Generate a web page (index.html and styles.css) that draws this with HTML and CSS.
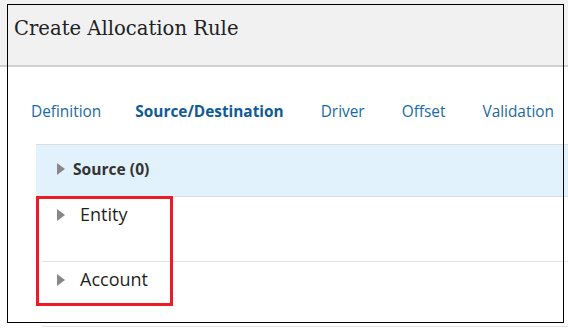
FILE: index.html
```html
<!DOCTYPE html>
<html>
<head>
<meta charset="utf-8">
<link rel="stylesheet" href="styles.css">
</head>
<body>
<div class="page">
  <header class="header">
    <h1 class="title">Create Allocation Rule</h1>
  </header>
  <nav class="tabs">
    <span class="tab first">Definition</span>
    <span class="tab active">Source/Destination</span>
    <span class="tab">Driver</span>
    <span class="tab">Offset</span>
    <span class="tab">Validation</span>
  </nav>
  <section class="panel">
    <div class="row source">
      <span class="tri"></span>
      <span class="source-label">Source (0)</span>
    </div>
    <div class="row item">
      <span class="tri"></span>
      <span class="item-label">Entity</span>
    </div>
    <div class="row item">
      <span class="tri"></span>
      <span class="item-label">Account</span>
    </div>
  </section>
  <div class="frame"></div>
  <div class="highlight"></div>
</div>
</body>
</html>
```
FILE: styles.css
```css
html, body {
  margin: 0;
  padding: 0;
  background: #fff;
  width: 568px;
  height: 328px;
  overflow: hidden;
}
.page {
  position: relative;
  width: 568px;
  height: 328px;
}
.header {
  height: 65px;
  background: #f1f1f1;
  border-bottom: 2px solid #d0d0d0;
  display: flex;
  align-items: flex-start;
}
.title {
  margin: 15px 0 0 14px;
  font-family: "DejaVu Serif", Georgia, serif;
  font-weight: normal;
  font-size: 19.6px;
  line-height: 28px;
  color: #222;
}
.tabs {
  display: flex;
  height: 77px;
  align-items: center;
  padding-left: 31px;
  padding-top: 12px;
  font-family: "Open Sans", "Noto Sans", sans-serif;
  font-size: 15.4px;
  color: #1a6aa8;
  box-sizing: border-box;
  gap: 37px;
}
.tab.first {
  margin-right: -3px;
}
.tab.active {
  font-weight: bold;
  color: #0f5b97;
}
.panel {
  margin-left: 36px;
}
.row {
  display: flex;
  align-items: center;
  box-sizing: border-box;
}
.source {
  height: 53px;
  background: #e1f2fd;
  border-top: 1px solid #dcdcdc;
  border-bottom: 1px solid #dcdcdc;
  padding-left: 21px;
  padding-bottom: 4px;
}
.item {
  height: 65px;
  margin-left: 6px;
  padding-left: 15px;
  border-bottom: 1px solid #e2e2e2;
  align-items: flex-start;
  padding-top: 5px;
}
.tri {
  width: 0;
  height: 0;
  border-top: 6px solid transparent;
  border-bottom: 6px solid transparent;
  border-left: 8px solid #888;
  flex: none;
}
.item .tri {
  margin-top: 7px;
}
.source-label {
  margin-left: 8px;
  font-family: "Open Sans", "Noto Sans", sans-serif;
  font-weight: bold;
  font-size: 15.6px;
  color: #333;
}
.item-label {
  margin-left: 15px;
  font-family: "Open Sans", "Noto Sans", sans-serif;
  font-size: 18px;
  line-height: 24px;
  color: #1f1f1f;
}
.frame {
  position: absolute;
  left: 7px;
  top: 4px;
  width: 555px;
  height: 317px;
  border: 1px solid #000;
  pointer-events: none;
}
.highlight {
  position: absolute;
  left: 36px;
  top: 196px;
  width: 131px;
  height: 104px;
  border: 3px solid #ed1c24;
  pointer-events: none;
}
```
